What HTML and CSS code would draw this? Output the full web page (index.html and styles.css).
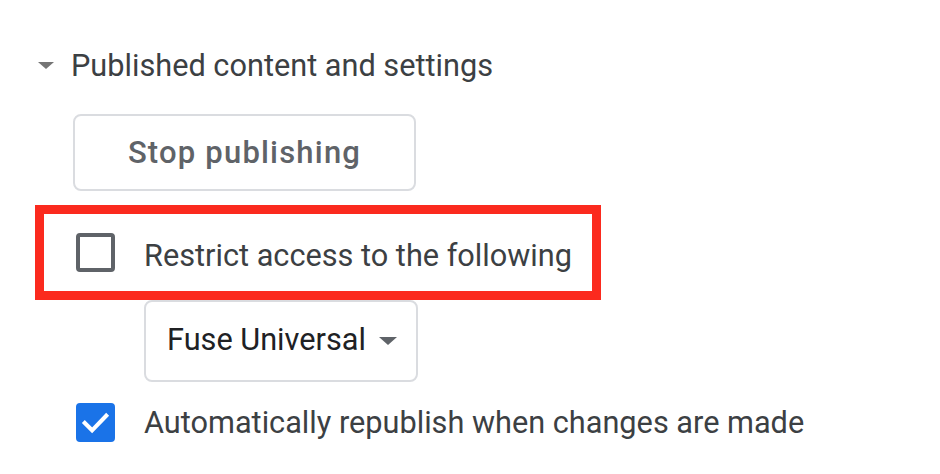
FILE: index.html
```html
<!DOCTYPE html>
<html>
<head>
<meta charset="utf-8">
<link rel="stylesheet" href="styles.css">
</head>
<body>
<div class="panel">
  <div class="header">
    <span class="caret"></span>
    <span class="title">Published content and settings</span>
  </div>
  <div class="body">
    <button class="btn">Stop publishing</button>
    <div class="highlight">
      <span class="checkbox"></span>
      <span class="label label-low">Restrict access to the following</span>
    </div>
    <div class="select">
      <span class="select-text">Fuse Universal</span>
      <span class="select-caret"></span>
    </div>
    <div class="row">
      <span class="checkbox checked">
        <svg viewBox="0 0 40 40" width="40" height="40"><path d="M9 20.5 L16.5 28 L31 13" fill="none" stroke="#fff" stroke-width="4.2" stroke-linecap="square"/></svg>
      </span>
      <span class="label">Automatically republish when changes are made</span>
    </div>
  </div>
</div>
</body>
</html>
```

FILE: styles.css
```css
* { box-sizing: border-box; }
html, body { margin: 0; padding: 0; background: #fff; }
body {
  font-family: Roboto, "Liberation Sans", Arial, sans-serif;
  width: 940px;
  height: 474px;
  overflow: hidden;
}
.panel {
  padding: 43px 0 0 38px;
}
.header {
  display: flex;
  align-items: center;
  height: 44px;
}
.caret {
  width: 0;
  height: 0;
  border-left: 8px solid transparent;
  border-right: 8px solid transparent;
  border-top: 7px solid #757575;
  margin-right: 17px;
}
.title {
  font-size: 30.7px;
  color: #3c4043;
}
.body {
  display: flex;
  flex-direction: column;
  align-items: flex-start;
  padding-left: 35px;
}
.btn {
  margin-top: 27px;
  width: 343px;
  height: 77px;
  border: 2px solid #dadce0;
  border-radius: 8px;
  background: #fff;
  font-family: Roboto, "Liberation Sans", Arial, sans-serif;
  font-size: 31px;
  font-weight: 500;
  letter-spacing: 1.2px;
  color: #5f6368;
  padding: 0;
}
.highlight {
  margin-top: 14px;
  margin-left: -38px;
  width: 566px;
  height: 95px;
  border: 9px solid #fb2a1e;
  display: flex;
  align-items: center;
  padding-left: 32px;
}
.checkbox {
  width: 39px;
  height: 39px;
  border: 4px solid #5f6368;
  border-radius: 4px;
  flex: none;
  display: flex;
  align-items: center;
  justify-content: center;
}
.checkbox.checked {
  background: #1a73e8;
  border-color: #1a73e8;
}
.checkbox.checked svg { width: 39px; height: 39px; flex: none; }
.label {
  font-size: 30.7px;
  color: #3c4043;
  margin-left: 29px;
}
.label-low {
  padding-top: 5px;
}
.select {
  margin-left: 71px;
  width: 274px;
  height: 82px;
  border: 2px solid #dadce0;
  border-radius: 8px;
  display: flex;
  align-items: center;
  padding-left: 21px;
}
.select-text {
  font-size: 30.7px;
  color: #202124;
  padding-bottom: 3px;
}
.select-caret {
  width: 0;
  height: 0;
  border-left: 9px solid transparent;
  border-right: 9px solid transparent;
  border-top: 8px solid #5f6368;
  margin-left: 13px;
}
.row {
  margin-top: 21px;
  display: flex;
  align-items: center;
  padding-left: 3px;
}
```
